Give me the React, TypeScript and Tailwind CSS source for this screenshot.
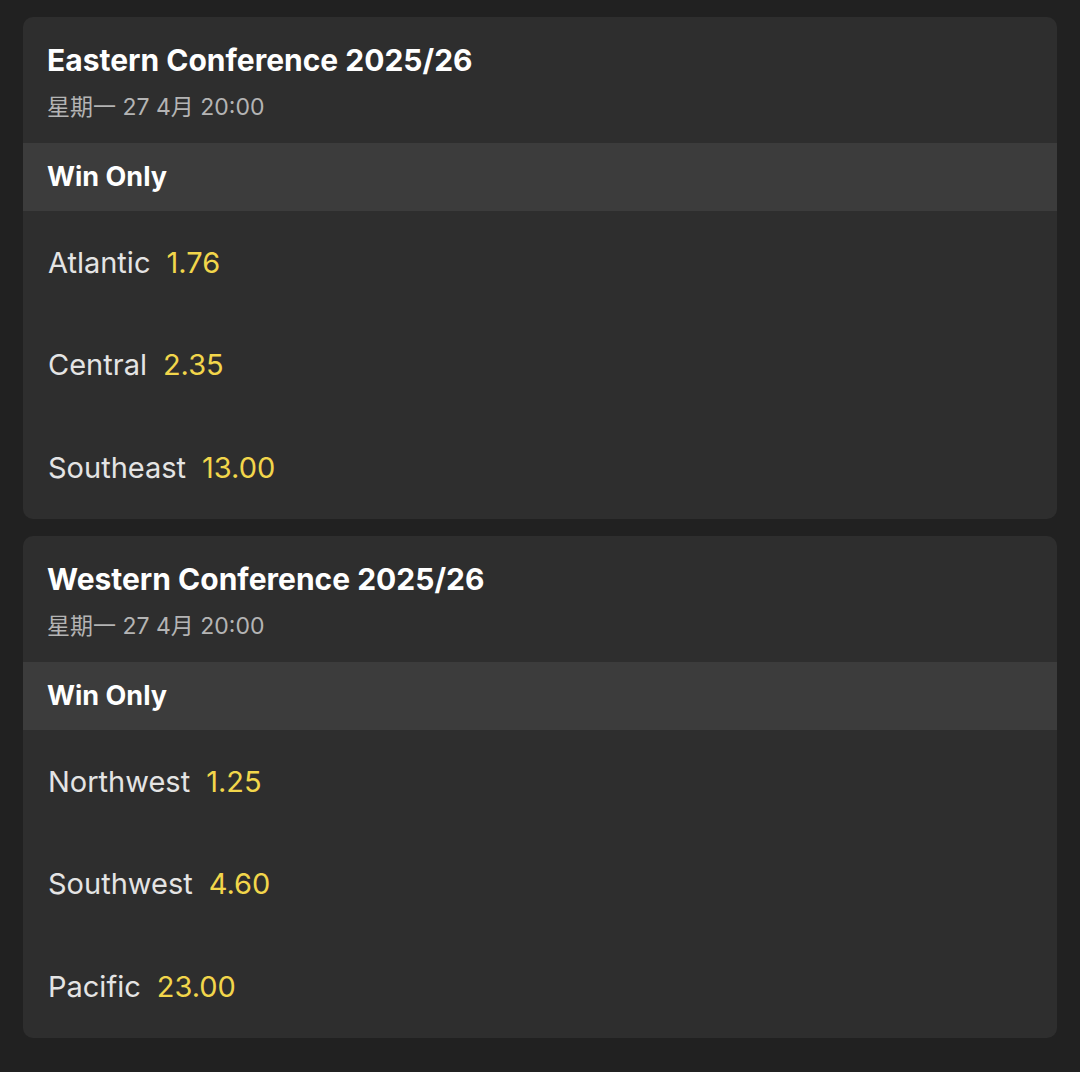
import React from "react"

interface Selection {
  name: string
  odds: string
}

interface Market {
  title: string
  date: string
  marketName: string
  selections: Selection[]
}

const markets: Market[] = [
  {
    title: "Eastern Conference 2025/26",
    date: "星期一 27 4月 20:00",
    marketName: "Win Only",
    selections: [
      { name: "Atlantic", odds: "1.76" },
      { name: "Central", odds: "2.35" },
      { name: "Southeast", odds: "13.00" },
    ],
  },
  {
    title: "Western Conference 2025/26",
    date: "星期一 27 4月 20:00",
    marketName: "Win Only",
    selections: [
      { name: "Northwest", odds: "1.25" },
      { name: "Southwest", odds: "4.60" },
      { name: "Pacific", odds: "23.00" },
    ],
  },
]

function MarketCard({ market }: { market: Market }) {
  return (
    <div className="rounded-[10px] bg-[#2e2e2e] overflow-hidden">
      {/* Header */}
      <div className="h-[126px] px-6 pt-[24px]">
        <h2 className="text-[30px] leading-[38px] font-bold text-white">{market.title}</h2>
        <p className="mt-[13px] text-[23px] leading-[30px] text-[#b4b4b4]">{market.date}</p>
      </div>

      {/* Market name band */}
      <div className="h-[68px] flex items-center px-6 bg-[#3c3c3c]">
        <span className="text-[27px] font-bold text-white">{market.marketName}</span>
      </div>

      {/* Selections */}
      <div className="h-[308px] flex flex-col">
        {market.selections.map((s) => (
          <div key={s.name} className="flex-1 flex items-center gap-[16px] pl-[25px] text-[29px]">
            <span className="text-[#e4e4e4]">{s.name}</span>
            <span className="text-[#f2d64b]">{s.odds}</span>
          </div>
        ))}
      </div>
    </div>
  )
}

export default function App() {
  return (
    <div
      className="min-h-[1072px] w-[1080px] bg-[#212121] px-[23px] pt-[17px] flex flex-col gap-[17px]"
      style={{ fontFamily: "Inter, 'Noto Sans CJK SC', sans-serif" }}
    >
      {markets.map((m) => (
        <MarketCard key={m.title} market={m} />
      ))}
    </div>
  )
}
